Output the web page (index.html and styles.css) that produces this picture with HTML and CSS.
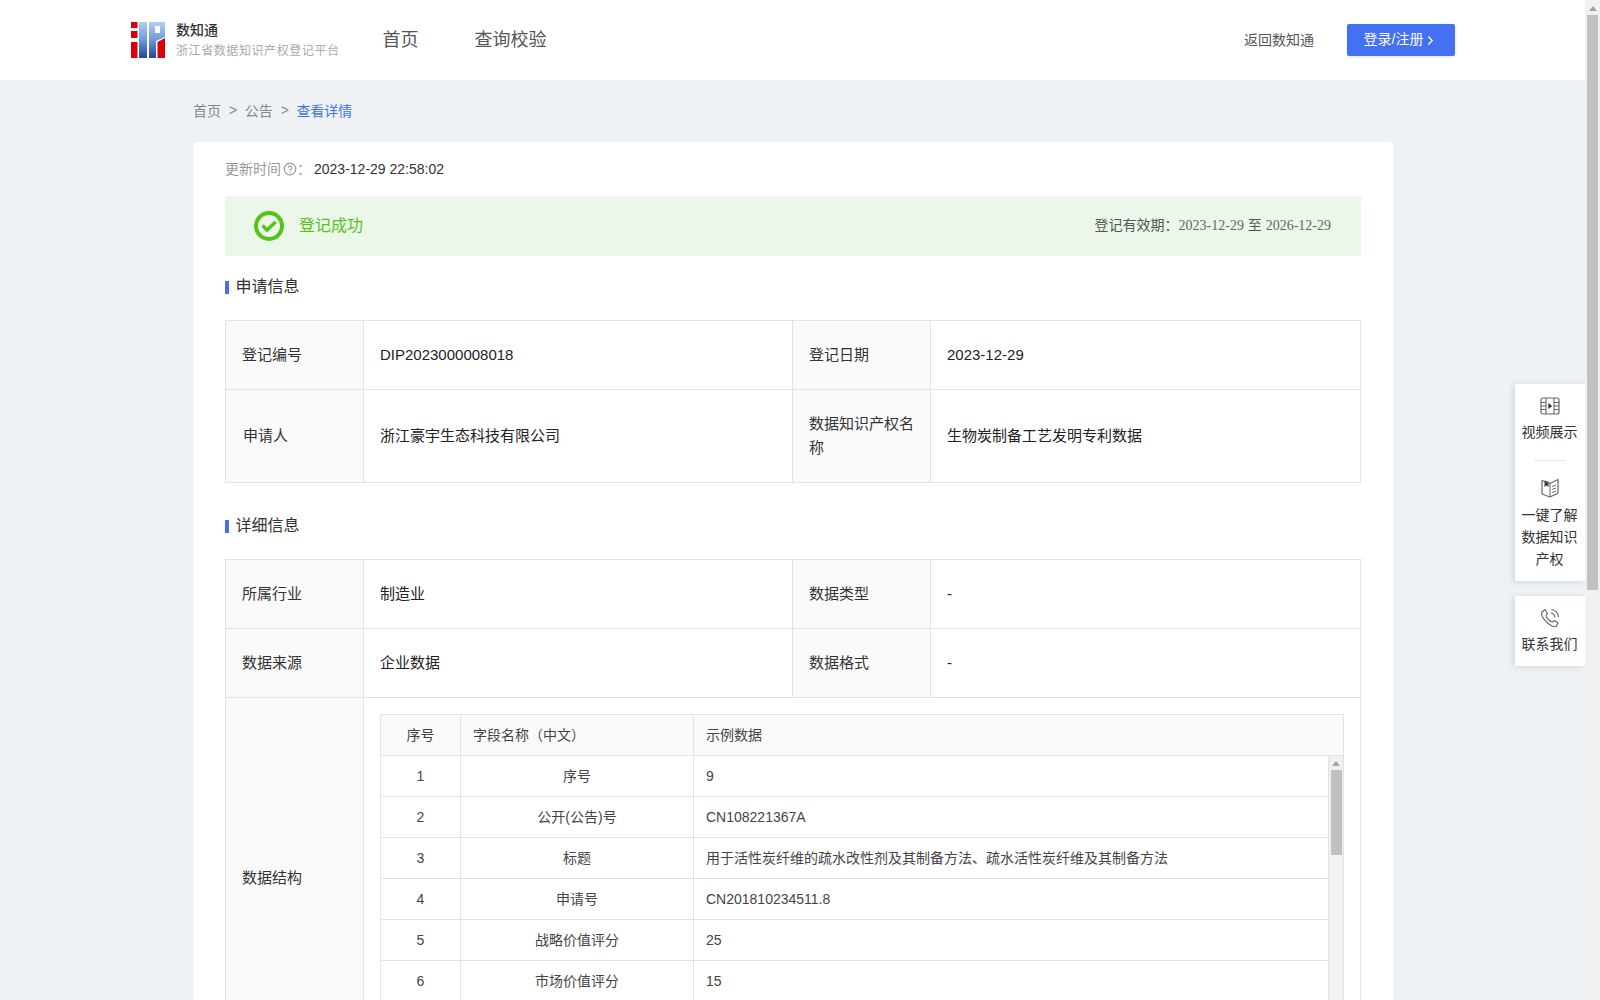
FILE: index.html
```html
<!DOCTYPE html>
<html lang="zh-CN">
<head>
<meta charset="utf-8">
<title>数知通</title>
<link rel="stylesheet" href="styles.css">
</head>
<body>
<div class="page">
  <header class="header">
    <div class="brand">
      <svg class="logo" viewBox="0 0 34 36" width="34" height="36">
        <defs>
          <linearGradient id="blue" x1="0" y1="0" x2="0" y2="1">
            <stop offset="0" stop-color="#b4d0ee"/>
            <stop offset="0.5" stop-color="#6c9ad8"/>
            <stop offset="1" stop-color="#25459a"/>
          </linearGradient>
        </defs>
        <rect x="0" y="0" width="6.500" height="6" fill="#d8000f"/>
        <rect x="0" y="9" width="6.500" height="7" fill="#d8000f"/>
        <rect x="0" y="20" width="6.500" height="16" fill="#d8000f"/>
        <rect x="8" y="0" width="8" height="36" fill="url(#blue)"/>
        <path d="M18 0H34V15L25 19V36H18Z" fill="url(#blue)"/>
        <rect x="24" y="4" width="5" height="7" fill="#fff"/>
        <path d="M26.500 20L34 16V36H26.500Z" fill="#d8000f"/>
      </svg>
      <div class="brand-text">
        <div class="brand-name">数知通</div>
        <div class="brand-sub">浙江省数据知识产权登记平台</div>
      </div>
    </div>
    <nav class="nav">
      <a class="nav-link">首页</a>
      <a class="nav-link">查询校验</a>
    </nav>
    <div class="header-right">
      <a class="back-link">返回数知通</a>
      <a class="login-btn"><span class="login-text">登录/注册</span>
        <svg class="chev" viewBox="0 0 8 12" width="7" height="11"><path d="M1.500 1.500L6 6L1.500 10.500" fill="none" stroke="#fff" stroke-width="1.500"/></svg>
      </a>
    </div>
  </header>

  <main class="main">
    <div class="crumbs">
      <span>首页</span><span class="sep">&gt;</span><span>公告</span><span class="sep">&gt;</span><span class="crumb-current">查看详情</span>
    </div>

    <section class="card">
      <div class="update">
        <span class="update-label">更新时间</span>
        <svg class="help" viewBox="0 0 14 14" width="14" height="14"><circle cx="7" cy="7" r="5.800" fill="none" stroke="#999" stroke-width="1.200"/><path d="M5.200 5.700A1.800 1.800 0 1 1 7.600 7.400C7.100 7.700 7 8 7 8.600" fill="none" stroke="#999" stroke-width="1.100"/><circle cx="7" cy="10.300" r=".7" fill="#999"/></svg>
        <span class="update-label colon">：</span>
        <span class="update-value">2023-12-29 22:58:02</span>
      </div>

      <div class="banner">
        <div class="banner-left">
          <svg class="ok" viewBox="0 0 30 30" width="30" height="30"><circle cx="15" cy="15" r="13" fill="none" stroke="#52c41a" stroke-width="4"/><path d="M8.500 14.500L13 19L21.500 11" fill="none" stroke="#52c41a" stroke-width="3.500"/></svg>
          <span class="banner-status">登记成功</span>
        </div>
        <div class="banner-date">登记有效期：<span class="serif">2023-12-29</span> 至 <span class="serif">2026-12-29</span></div>
      </div>

      <h2 class="section-title first">申请信息</h2>
      <table class="info">
        <colgroup><col class="c-label"><col class="c-value"><col class="c-label"><col></colgroup>
        <tr>
          <th>登记编号</th><td>DIP2023000008018</td>
          <th>登记日期</th><td>2023-12-29</td>
        </tr>
        <tr>
          <th><span class="nudge">申请人</span></th><td>浙江豪宇生态科技有限公司</td>
          <th>数据知识产权名称</th><td>生物炭制备工艺发明专利数据</td>
        </tr>
      </table>

      <h2 class="section-title second">详细信息</h2>
      <table class="info">
        <colgroup><col class="c-label"><col class="c-value"><col class="c-label"><col></colgroup>
        <tr>
          <th>所属行业</th><td>制造业</td>
          <th>数据类型</th><td>-</td>
        </tr>
        <tr>
          <th>数据来源</th><td>企业数据</td>
          <th>数据格式</th><td>-</td>
        </tr>
        <tr>
          <th>数据结构</th>
          <td colspan="3" class="nested-cell">
            <div class="nested">
              <table class="inner inner-head">
                <colgroup><col class="i-a"><col class="i-b"><col></colgroup>
                <tr><th class="center">序号</th><th>字段名称（中文）</th><th>示例数据</th></tr>
              </table>
              <div class="inner-scroll">
                <table class="inner inner-body">
                  <colgroup><col class="i-a"><col class="i-b"><col></colgroup>
                  <tr><td class="center">1</td><td class="center">序号</td><td>9</td></tr>
                  <tr><td class="center">2</td><td class="center">公开(公告)号</td><td>CN108221367A</td></tr>
                  <tr><td class="center">3</td><td class="center">标题</td><td>用于活性炭纤维的疏水改性剂及其制备方法、疏水活性炭纤维及其制备方法</td></tr>
                  <tr><td class="center">4</td><td class="center">申请号</td><td>CN201810234511.8</td></tr>
                  <tr><td class="center">5</td><td class="center">战略价值评分</td><td>25</td></tr>
                  <tr><td class="center">6</td><td class="center">市场价值评分</td><td>15</td></tr>
                </table>
                <div class="inner-bar">
                  <span class="arrow"></span>
                  <span class="inner-thumb"></span>
                </div>
              </div>
            </div>
          </td>
        </tr>
      </table>
    </section>
  </main>
</div>

<aside class="float">
  <div class="float-card">
    <div class="float-item">
      <svg viewBox="0 0 20 20" width="20" height="20"><rect x="1" y="2" width="18" height="16" rx="2" fill="none" stroke="#666" stroke-width="1.200"/><path d="M6 2V18M14 2V18M1 6.500H6M1 10H6M1 13.500H6M14 6.500H19M14 10H19M14 13.500H19" fill="none" stroke="#666" stroke-width="1.100"/><path d="M8.300 7L12.300 10L8.300 13Z" fill="#333"/></svg>
      <span>视频展示</span>
    </div>
    <div class="float-divider"></div>
    <div class="float-item second">
      <svg viewBox="0 0 20 20" width="20" height="20"><path d="M2 2.500L10 5.500L18 1.500V15L10 19L2 16Z" fill="none" stroke="#666" stroke-width="1.200" stroke-linejoin="round"/><path d="M10 5.500V19" stroke="#666" stroke-width="1"/><path d="M4.500 2.500L8.500 4V9L6.500 7.500L4.500 9Z" fill="#444"/><path d="M12 8.500L16 7M12 11.500L16 10M12 14.500L16 13" stroke="#666" stroke-width="1"/></svg>
      <span>一键了解<br>数据知识<br>产权</span>
    </div>
  </div>
  <div class="float-card contact">
    <div class="float-item">
      <svg viewBox="0 0 20 20" width="20" height="20"><path d="M5 1.500L7.500 5.500L6 7.500C6.500 10 9.500 13.500 12.500 14L14.500 12.500L18 15L16.500 18C15 19.500 11 18.500 7 14.500C2.500 10 1 6 2 4Z" fill="none" stroke="#666" stroke-width="1.100" stroke-linejoin="round"/><path d="M11 5A5 5 0 0 1 15 9.500M11.500 1.500A8.500 8.500 0 0 1 18.500 9" fill="none" stroke="#666" stroke-width="1.100"/></svg>
      <span>联系我们</span>
    </div>
  </div>
</aside>

<div class="page-bar">
  <span class="arrow"></span>
  <span class="page-thumb"></span>
</div>
</body>
</html>
```

FILE: styles.css
```css
* { box-sizing: border-box; }
html, body {
  margin: 0;
  height: 1000px;
  overflow: hidden;
}
body {
  background: #eff2f5;
  font-family: "Liberation Sans", "Noto Sans CJK SC", sans-serif;
  color: #333;
  font-size: 14px;
}
.page { width: 1585px; }

.header {
  height: 80px;
  background: #fff;
  display: flex;
  align-items: center;
  padding-left: 131px;
  padding-right: 130px;
}
.brand { display: flex; align-items: center; gap: 11px; }
.logo { display: block; }
.brand-name { font-size: 14px; font-weight: 500; color: #333; line-height: 20px; }
.brand-sub { font-size: 12px; letter-spacing: .58px; color: #aaa; line-height: 18px; margin-top: 2px; }
.nav { display: flex; gap: 56px; margin-left: 43px; padding-bottom: 4px; }
.nav-link { font-size: 18px; color: #555; }
.header-right { margin-left: auto; display: flex; align-items: center; gap: 33px; }
.back-link { color: #555; font-size: 14px; padding-bottom: 2px; }
.login-btn {
  width: 108px;
  height: 32px;
  display: flex;
  align-items: center;
  justify-content: center;
  gap: 4px;
  background: #4470f2;
  color: #fff;
  border-radius: 2px;
  box-shadow: 0 1px 3px rgba(68, 112, 242, .18);
  padding-right: 4px;
}
.login-text { padding-bottom: 4px; }
.chev { display: block; }

.main { width: 1200px; margin-left: 193px; }
.crumbs {
  height: 62px;
  display: flex;
  align-items: center;
  color: #888;
  font-size: 14px;
  padding-bottom: 3px;
}
.sep { margin: 0 7.500px 0 8px; }
.crumb-current { color: #3f72f2; }

.card {
  background: #fff;
  border-radius: 4px;
  padding: 0 32px 40px;
  height: 1000px;
}
.update {
  height: 54px;
  display: flex;
  align-items: center;
}
.update-label { color: #999; padding-bottom: 2px; }
.help { margin-left: 2px; }
.colon { width: 17px; }
.update-value { color: #333; }

.banner {
  height: 60px;
  background: #ebf7e8;
  display: flex;
  align-items: center;
  justify-content: space-between;
  padding: 0 30px 0 29px;
}
.banner-left { display: flex; align-items: center; gap: 15px; }
.ok { display: block; }
.banner-status { font-size: 16px; color: #52c41a; padding-bottom: 4px; }
.banner-date { color: #555; font-size: 14px; padding-bottom: 4px; }
.serif { font-family: "Liberation Serif", serif; color: #666; }

.section-title {
  font-size: 16px;
  font-weight: 400;
  color: #333;
  line-height: 24px;
  margin: 0;
  padding-left: 10.500px;
  position: relative;
}
.section-title::before {
  content: "";
  position: absolute;
  left: 0;
  top: 6px;
  width: 4px;
  height: 13px;
  background: #4470f2;
}
.section-title.first { margin-top: 19px; margin-bottom: 21px; }
.section-title.second { margin-top: 31px; margin-bottom: 21px; }

.info {
  width: 1136px;
  border-collapse: collapse;
  table-layout: fixed;
  font-size: 15px;
  line-height: 24px;
}
.c-label { width: 138px; }
.c-value { width: 429px; }
.info > tbody > tr > th,
.info > tbody > tr > td {
  border: 1px solid #e3e3e3;
  padding: 22px 16px;
  text-align: left;
  font-weight: 400;
  color: #222;
}
.info > tbody > tr > th { background: #fafafa; color: #333; }
.nudge { margin-left: 1px; }
.info > tbody > tr > td.nested-cell { padding: 16px; }

.nested { width: 964px; }
.inner {
  width: 100%;
  border-collapse: collapse;
  table-layout: fixed;
  font-size: 14px;
  color: #444;
}
.i-a { width: 80px; }
.i-b { width: 233px; }
.inner th,
.inner td {
  height: 41px;
  padding: 0 12px;
  border: 1px solid #e3e3e3;
  font-weight: 400;
  text-align: left;
  line-height: 20px;
}
.inner th { background: #fafafa; }
.inner .center { text-align: center; }
.inner-head { border-bottom: 0; }
.inner-scroll {
  height: 286px;
  display: flex;
  overflow: hidden;
}
.inner-body { width: 948px; flex: none; align-self: flex-start; }
.inner-body tr:first-child td { border-top: 0; height: 40px; }
.inner-body td:last-child { border-right: 0; }
.inner-bar {
  width: 16px;
  background: #f1f1f1;
  border-left: 1px solid #e3e3e3;
  border-right: 1px solid #e3e3e3;
  display: flex;
  flex-direction: column;
  align-items: center;
  padding-top: 5px;
}
.arrow {
  width: 0;
  height: 0;
  border-left: 4px solid transparent;
  border-right: 4px solid transparent;
  border-bottom: 5px solid #a3a3a3;
}
.inner-thumb {
  width: 11px;
  height: 85px;
  margin-top: 4px;
  background: #c1c1c1;
}

.float {
  position: absolute;
  left: 1515px;
  top: 384px;
  width: 70px;
  display: flex;
  flex-direction: column;
  gap: 15px;
}
.float-card {
  background: #fff;
  box-shadow: -2px 1px 6px rgba(70, 80, 100, .18);
  padding-top: 12px;
  padding-bottom: 11px;
  padding-right: 1px;
}
.float-item {
  display: flex;
  flex-direction: column;
  align-items: center;
  text-align: center;
  font-size: 14px;
  line-height: 22px;
  color: #333;
  gap: 5px;
}
.float-item.second { gap: 6px; }
.float-item svg { display: block; }
.float-divider {
  width: 32px;
  height: 1px;
  background: #e5e5e5;
  margin: 17px auto 17px;
}
.contact { padding-top: 12px; padding-bottom: 11px; }

.page-bar {
  position: absolute;
  left: 1585px;
  top: 0;
  width: 15px;
  height: 1000px;
  background: #f1f1f1;
  display: flex;
  flex-direction: column;
  align-items: center;
  padding-top: 6px;
}
.page-thumb {
  width: 11px;
  height: 575px;
  margin-top: 4px;
  background: #c1c1c1;
}
```
